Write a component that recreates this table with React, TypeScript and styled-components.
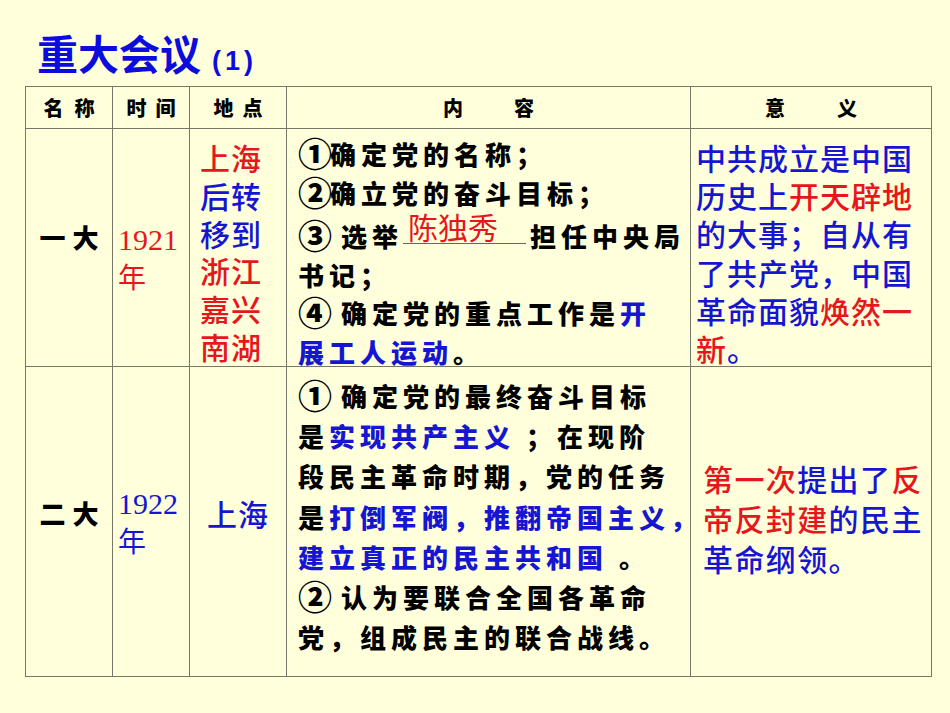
import React from 'react'
import styled, { createGlobalStyle } from 'styled-components'

const RED = '#e5161c'
const BLUE = '#1616d2'
const CJK = `"Noto Sans CJK SC", "Noto Sans", sans-serif`

const GlobalStyle = createGlobalStyle`
  body {
    margin: 0;
    background: #ffffdc;
    font-family: ${CJK};
  }
`

const Page = styled.div`
  width: 950px;
  height: 713px;
  padding-top: 30px;
  box-sizing: border-box;
  background: #ffffdc;
  overflow: hidden;
`

const Title = styled.h1`
  display: flex;
  align-items: baseline;
  height: 44px;
  margin: 0 0 12px 37px;
  font-size: 41px;
  line-height: 44px;
  font-weight: 700;
  color: #0c0cdc;
`

const TitleNum = styled.span`
  margin-left: 11px;
  font-family: "Liberation Sans", Arial, sans-serif;
  font-size: 27px;
  line-height: 1;
  letter-spacing: 4px;
`

const Table = styled.div`
  display: grid;
  grid-template-columns: 87px 77px 97px 404px 241px;
  grid-template-rows: 42px 238px 310px;
  width: max-content;
  margin-left: 25px;
  border-top: 1px solid #77776a;
  border-left: 1px solid #77776a;
`

const Cell = styled.div<{ $valign?: string; $align?: string; $pad?: string }>`
  display: flex;
  flex-direction: column;
  justify-content: ${({ $valign }) => $valign || 'flex-start'};
  align-items: ${({ $align }) => $align || 'flex-start'};
  padding: ${({ $pad }) => $pad || '0'};
  box-sizing: border-box;
  border-right: 1px solid #77776a;
  border-bottom: 1px solid #77776a;
  overflow: visible;
`

const HeadCell = styled.div<{ $gap: number }>`
  display: flex;
  align-items: center;
  justify-content: center;
  gap: ${({ $gap }) => $gap}px;
  box-sizing: border-box;
  border-right: 1px solid #77776a;
  border-bottom: 1px solid #77776a;
  font-size: 20px;
  font-weight: 900;
  color: #000;
`

const Name = styled.div`
  display: flex;
  gap: 7px;
  font-size: 26px;
  font-weight: 900;
  color: #000;
`

const Kai = styled.div<{ $lh: number }>`
  font-size: 26px;
  font-weight: 900;
  letter-spacing: 5px;
  line-height: ${({ $lh }) => $lh}px;
  color: #000;
`

const Hei = styled.div<{ $lh: number; $ls?: number }>`
  font-size: 30px;
  font-weight: 500;
  letter-spacing: ${({ $ls }) => $ls ?? 1}px;
  line-height: ${({ $lh }) => $lh}px;
  color: ${BLUE};
`

const Year = styled.div<{ $c: string }>`
  font-size: 28px;
  line-height: 37px;
  color: ${({ $c }) => $c};
`

const Digits = styled.span`
  font-family: "Liberation Serif", "Noto Sans CJK SC", serif;
  font-size: 30px;
`

const Line = styled.div`
  white-space: nowrap;
`

const Ink = styled.span<{ $c: string }>`
  color: ${({ $c }) => $c};
`

const Circ = styled.span`
  margin-right: -2px;
  font-size: 34px;
  line-height: 1;
  letter-spacing: 0;
  vertical-align: -2px;
`

const Blank = styled.span`
  display: inline-block;
  width: 123px;
  margin-right: 4px;
  padding: 0 0 3px 5px;
  box-sizing: border-box;
  border-bottom: 1px solid #666;
  vertical-align: 8px;
  font-size: 30px;
  font-weight: 400;
  letter-spacing: 0;
  line-height: 28px;
  color: ${RED};
`

export default function App() {
  return (
    <Page>
      <GlobalStyle />
      <Title>
        重大会议<TitleNum>(1)</TitleNum>
      </Title>
      <Table>
        <HeadCell $gap={11}>
          <span>名</span>
          <span>称</span>
        </HeadCell>
        <HeadCell $gap={9}>
          <span>时</span>
          <span>间</span>
        </HeadCell>
        <HeadCell $gap={9}>
          <span>地</span>
          <span>点</span>
        </HeadCell>
        <HeadCell $gap={51}>
          <span>内</span>
          <span>容</span>
        </HeadCell>
        <HeadCell $gap={52}>
          <span>意</span>
          <span>义</span>
        </HeadCell>

        {/* 一大 */}
        <Cell $valign="center" $align="center" $pad="0 0 22px 0">
          <Name>
            <span>一</span>
            <span>大</span>
          </Name>
        </Cell>
        <Cell $valign="center" $pad="20px 0 0 5px">
          <Year $c={RED}>
            <Line>
              <Digits>1921</Digits>
            </Line>
            <Line>年</Line>
          </Year>
        </Cell>
        <Cell $pad="10px 0 0 10px">
          <Hei $lh={37.8}>
            <Line>
              <Ink $c={RED}>上海</Ink>
            </Line>
            <Line>后转</Line>
            <Line>移到</Line>
            <Line>
              <Ink $c={RED}>浙江</Ink>
            </Line>
            <Line>
              <Ink $c={RED}>嘉兴</Ink>
            </Line>
            <Line>
              <Ink $c={RED}>南湖</Ink>
            </Line>
          </Hei>
        </Cell>
        <Cell $pad="6px 0 0 11px">
          <Kai $lh={38.6}>
            <Line>
              <Circ>①</Circ>确定党的名称；
            </Line>
            <Line>
              <Circ>②</Circ>确立党的奋斗目标；
            </Line>
            <Line>
              <Circ>③</Circ> 选举<Blank>陈独秀</Blank>担任中央局
            </Line>
            <Line>书记；</Line>
            <Line>
              <Circ>④</Circ> 确定党的重点工作是<Ink $c={BLUE}>开</Ink>
            </Line>
            <Line>
              <Ink $c={BLUE}>展工人运动</Ink>。
            </Line>
          </Kai>
        </Cell>
        <Cell $pad="9px 0 0 5px">
          <Hei $lh={38.2}>
            <Line>中共成立是中国</Line>
            <Line>
              历史上<Ink $c={RED}>开天辟地</Ink>
            </Line>
            <Line>的大事；自从有</Line>
            <Line>了共产党，中国</Line>
            <Line>
              革命面貌<Ink $c={RED}>焕然一</Ink>
            </Line>
            <Line>
              <Ink $c={RED}>新</Ink>。
            </Line>
          </Hei>
        </Cell>

        {/* 二大 */}
        <Cell $valign="center" $align="center" $pad="0 0 18px 0">
          <Name>
            <span>二</span>
            <span>大</span>
          </Name>
        </Cell>
        <Cell $valign="center" $pad="0 0 0 5px">
          <Year $c={BLUE}>
            <Line>
              <Digits>1922</Digits>
            </Line>
            <Line>年</Line>
          </Year>
        </Cell>
        <Cell $valign="center" $align="center" $pad="0 0 18px 0">
          <Hei $lh={38}>
            <Line>上海</Line>
          </Hei>
        </Cell>
        <Cell $pad="9px 0 0 11px">
          <Kai $lh={40.2}>
            <Line>
              <Circ>①</Circ> 确定党的最终奋斗目标
            </Line>
            <Line>
              是<Ink $c={BLUE}>实现共产主义</Ink> ；在现阶
            </Line>
            <Line>段民主革命时期，党的任务</Line>
            <Line>
              是<Ink $c={BLUE}>打倒军阀，推翻帝国主义，</Ink>
            </Line>
            <Line>
              <Ink $c={BLUE}>建立真正的民主共和国</Ink> 。
            </Line>
            <Line>
              <Circ>②</Circ> 认为要联合全国各革命
            </Line>
            <Line>党，组成民主的联合战线。</Line>
          </Kai>
        </Cell>
        <Cell $valign="center" $pad="0 0 8px 12px">
          <Hei $lh={40} $ls={1.4}>
            <Line>
              <Ink $c={RED}>第一次</Ink>提出了<Ink $c={RED}>反</Ink>
            </Line>
            <Line>
              <Ink $c={RED}>帝反封建</Ink>的民主
            </Line>
            <Line>革命纲领。</Line>
          </Hei>
        </Cell>
      </Table>
    </Page>
  )
}
